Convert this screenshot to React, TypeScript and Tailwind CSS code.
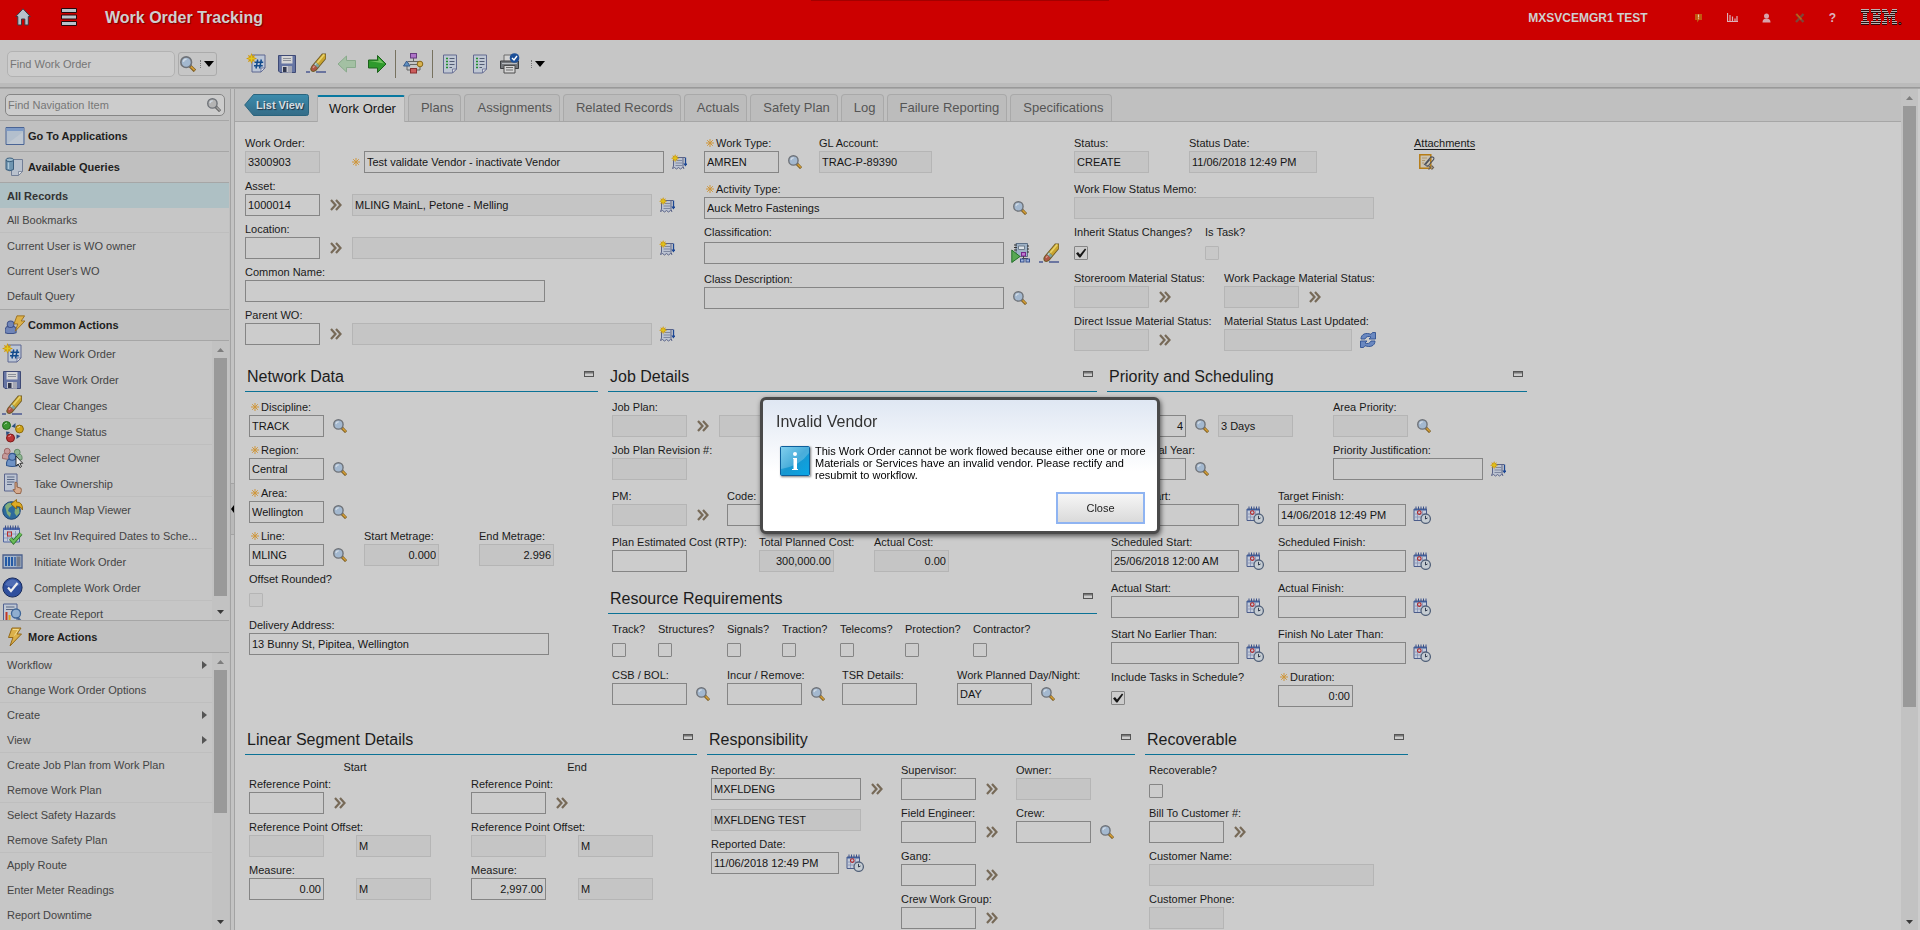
import React, { useId } from "react";

/* ---------- icons ---------- */

type IconProps = { className?: string };

const Svg = ({ size = 20, box = 20, className = "", children }: { size?: number; box?: number; className?: string; children: React.ReactNode }) => (
  <svg width={size} height={size} viewBox={`0 0 ${box} ${box}`} className={`block shrink-0 ${className}`} fill="none" aria-hidden="true">
    {children}
  </svg>
);

const Sparkle = () => (
  <>
    <path d="M5.500 0 6.700 3 9.200 1.800 8 4.300 11 5.500 8 6.700 9.200 9.200 6.700 8 5.500 11 4.300 8 1.800 9.200 3 6.700 0 5.500 3 4.300 1.800 1.800 4.300 3Z" fill="#d09a10" />
    <path d="M5.500 2.500v6M2.500 5.500h6" stroke="#e0c820" strokeWidth="1.400" />
  </>
);

const NewIcon = () => (
  <Svg size={21} box={21}>
    <path d="M6 2h13v13l-4 4H6z" fill="#bcc6d6" stroke="#5c6690" />
    <path d="M19 15h-4v4z" fill="#dfe3ea" stroke="#5c6690" strokeWidth=".8" />
    <path d="M11.700 6.500 10 15.500M15.300 6.500 13.600 15.500M8.500 9.300h8.700M8 12.700h8.700" stroke="#124a8c" strokeWidth="1.500" />
    <Sparkle />
  </Svg>
);

const SaveIcon = () => (
  <Svg>
    <path d="M1.500 1.500h17v17h-15.500l-1.500-1.500z" fill="#6675a3" stroke="#3f4a75" />
    <path d="M4.500 2h11v7.500h-11z" fill="#d5d5d5" />
    <path d="M6 4.500h8M6 6.500h8" stroke="#8b8f98" />
    <path d="M5 12h10v6.500h-10z" fill="#c9cad0" />
    <path d="M6 13h3.500v5h-3.500z" fill="#31374e" />
    <path d="M11 12h4v6.500h-4z" fill="#a4a7b4" />
  </Svg>
);

const EraserIcon = () => (
  <Svg size={21} box={21}>
    <path d="M0 19h4M10 19h10" stroke="#4c5a91" strokeWidth="1.600" />
    <path d="M20 .5v5.500L10.500 17.500q-3 2.500-5.500.5-1.500-2.500.5-5L16 .5z" fill="#6f5a24" />
    <path d="M19.300 1.200v4.300L13.500 12.500 9.800 9.300 16.500 1.200z" fill="#c9a42e" />
    <path d="M18.200 1.500 11.300 9.700" stroke="#e6d169" strokeWidth="1.700" />
    <path d="m9.800 9.300 3.700 3.200-2 2.300-3.600-3.200z" fill="#7fa39c" />
    <path d="M10.500 10 9 11.800" stroke="#bcd4cf" strokeWidth="1.200" />
    <path d="m7.900 11.600 3.600 3.200-1.700 2q-2.300 1.800-4 .6-1-1.800.4-3.800z" fill="#ae5545" />
    <path d="M8.500 13 7 14.800" stroke="#d49a8c" strokeWidth="1.200" />
  </Svg>
);

const BackArrow = () => (
  <Svg>
    <path d="M1 10 9.500 2v4.500H18.500v7H9.500V18z" fill="#a3c0a3" stroke="#8aaa8c" strokeLinejoin="round" />
  </Svg>
);

const NextArrow = () => (
  <Svg>
    <path d="M19 10 10.500 1.500v4.500H1.500v8H10.500v4.500z" fill="#2f9a2c" stroke="#1c611b" strokeLinejoin="round" />
    <path d="M2.500 7H11.500V4l5.500 5.500z" fill="#72c25f" />
  </Svg>
);

const FlowIcon = () => (
  <Svg size={21} box={21}>
    <path d="M10.500 5v3M5 8.500h11M4 8.500v2M17 8v2M4 13v4h3M17 14v3h-3" stroke="#656565" />
    <rect x="7.500" y=".5" width="6" height="4.500" fill="#ae74c8" stroke="#673b80" />
    <path d="M3.700 8 7 13H.5z" fill="#5f8fc0" stroke="#375a8a" />
    <path d="M7 11.500h7" stroke="#656565" />
    <circle cx="17" cy="11" r="2.800" fill="#d8b350" stroke="#896718" />
    <rect x="7.500" y="15.500" width="6" height="4.500" fill="#cb5c5c" stroke="#8a2e2e" />
  </Svg>
);

const ListIcon = () => (
  <Svg>
    <path d="M3.500 1h13v14l-4 4h-9z" fill="#bfc7d3" stroke="#626a90" />
    <path d="M16.500 15h-4v4z" fill="#e0e0e6" stroke="#626a90" strokeWidth=".8" />
    <path d="M6 4.500h2M6 7.500h2M6 10.500h2M6 13.500h2" stroke="#21912a" strokeWidth="1.600" />
    <path d="M9.500 4.500h5M9.500 7.500h5M9.500 10.500h5M9.500 13.500h2.500" stroke="#525c74" />
  </Svg>
);

const PrintIcon = () => (
  <Svg size={21} box={21}>
    <path d="M5 2h9v7H5z" fill="#d2d2d2" stroke="#6c6c6c" />
    <path d="M1.500 8h18v7.500h-18z" fill="#74777b" stroke="#3b3d40" />
    <path d="M3 10.500h15" stroke="#b9bcc0" />
    <path d="M5 12.500h11v7.500H5z" fill="#d4d4d4" stroke="#4c4c4c" />
    <path d="M7 14.500h7M7 17h7" stroke="#6d6d6d" />
    <circle cx="15.500" cy="5" r="4.800" fill="#1c4f98" />
    <path d="m13 5 2 2 3-4" stroke="#fff" strokeWidth="1.400" />
  </Svg>
);

const Magnifier = ({ size = 14, gray = false }: { size?: number; gray?: boolean }) => (
  <Svg size={size} box={15}>
    <path d="m9 9 5 5" stroke={gray ? "#5f5f5f" : "#7d5f26"} strokeWidth="3.200" />
    <path d="m10.200 9.900 3.500 3.500" stroke={gray ? "#a4a4a4" : "#d9a136"} strokeWidth="1.500" />
    <circle cx="5.800" cy="5.800" r="5" fill={gray ? "#b4b4b4" : "#a3b8cf"} stroke="#6e7278" strokeWidth="1.500" />
    <path d="M3.200 5.500a2.800 2.800 0 0 1 3-2.500" stroke="#d0dae4" strokeWidth="1.300" />
  </Svg>
);

const Chevrons = () => (
  <Svg size={12} box={12}>
    <path d="m1 1 4.500 5L1 11M6 1l4.500 5L6 11" stroke="#776a58" strokeWidth="2.200" />
  </Svg>
);

const LongDesc = () => (
  <Svg size={16} box={16}>
    <path d="M2.500 3.500h11.500M2.500 3.500v8.500l-1 2.500 2-1 2 1.500 2-1.500 2 1.500 2-1.500 1.500 1-1-2V3.500z" fill="#bcc3d2" stroke="#5b6488" strokeLinejoin="round" />
    <path d="M5.500 6.500h6M4.500 9h7M4.500 11.500h7" stroke="#7f88a0" />
    <path d="M14.500 3.500v7" stroke="#1c4794" strokeWidth="1.300" />
    <path d="M12.300 9.500H16.500l-2.100 3z" fill="#1c4794" />
    <g transform="scale(.75)"><Sparkle /></g>
  </Svg>
);

const CalIcon = () => (
  <Svg size={18} box={18}>
    <path d="M1 3h12.500v11.500H1z" fill="#c4cbda" stroke="#4b5c8b" />
    <path d="M1 3h12.500v1.500H1z" fill="#42609c" />
    <path d="M3 .5v3M5.500.5v3M8 .5v3M10.500.5v3M13 .5v3" stroke="#3a508a" />
    <path d="M4.500 5v9M9.500 5v9M1 8h12M1 11h12" stroke="#8593b5" strokeWidth=".8" />
    <circle cx="6.300" cy="6.600" r="1.800" stroke="#b52424" strokeWidth="1.100" />
    <circle cx="12.700" cy="12.700" r="4.700" fill="#c5ccd2" stroke="#53627a" strokeWidth="1.300" />
    <path d="M12.500 9.800v3.200l2-1" stroke="#333d50" />
  </Svg>
);

const ClassIcon = () => (
  <Svg>
    <path d="M5 .5h11.500v13H5z" fill="#9fb2c6" stroke="#5e7187" />
    <path d="M7.500 3h6v3.500h-6z" fill="#dce2e8" stroke="#6f7d8c" />
    <path d="M3 2h3M3 4.500h3M3 7h3M16 3h2M16 6h2M16 9h2" stroke="#333" />
    <path d="M.8 7v12.500L9 13.500z" fill="#57a852" stroke="#22702a" />
    <rect x="10.500" y="9.500" width="4" height="3.500" fill="#bf76d0" stroke="#74278a" />
    <path d="M12.500 13v2.500M11 15.500h6" stroke="#444" />
    <rect x="9.500" y="16" width="3.500" height="3" fill="#9eb4de" stroke="#36508e" />
    <rect x="15" y="16" width="3.500" height="3" fill="#9eb4de" stroke="#36508e" />
  </Svg>
);

const RefreshIcon = () => (
  <Svg size={16} box={16}>
    <path d="M1 7C1 2 6 .3 11 2.300L12.500.5h3V7H9l2-2C8.500 3.800 6 4.500 5 7z" fill="#6a88c0" stroke="#2f5192" strokeWidth=".9" />
    <path d="M15 9C15 14 10 15.700 5 13.700L3.500 15.500h-3V9H7l-2 2c2.500 1.200 5 .5 6-2z" fill="#6a88c0" stroke="#2f5192" strokeWidth=".9" />
  </Svg>
);

const AttachIcon = () => (
  <Svg size={16} box={16}>
    <path d="M.8.800h11v13.500h-11z" fill="#cbc3b2" stroke="#b67c15" strokeWidth="1.500" />
    <path d="M3 4h5M3 6.500h3M3 9h2" stroke="#b09a72" />
    <path d="m5 11 6.500-7.500c1.500-1.500 4.500 0 3 2.200L9.500 11.500c-1.500 1.500-3.500 0-2.500-1.500l4-4.500" stroke="#4e525c" strokeWidth="1.100" />
    <path d="m9.500 11.500 2 2-2 2M12.500 11.500l2 2-2 2" stroke="#6d6254" strokeWidth="1.200" />
  </Svg>
);

const WindowIcon = () => (
  <Svg>
    <path d="M1 1.500h18v17H1z" fill="#b3bfcd" stroke="#4a6495" />
    <path d="M1.500 2h17v3h-17z" fill="#7d9ac6" />
    <path d="M2 18 18 6v12z" fill="#c7cdd4" opacity=".6" />
  </Svg>
);

const QueriesIcon = () => (
  <Svg>
    <path d="M6.500 2.500h11v12l-4 4h-7z" fill="#b9c1cd" stroke="#727e96" />
    <path d="M17.500 14.500h-4v4z" fill="#dfe2e6" stroke="#727e96" strokeWidth=".8" />
    <path d="M1 3v9.500q4 2.500 7.500 0V3z" fill="#6f95b0" stroke="#3c5f7d" />
    <ellipse cx="4.800" cy="2.800" rx="3.800" ry="1.800" fill="#9dbbcd" stroke="#3c5f7d" />
    <path d="M3.500 5.500v6.500" stroke="#adc8d8" strokeWidth="1.400" />
  </Svg>
);

const Bolt = () => <path d="M7 1h9l-4 6h4.500L5 19l3-8.500H3.500z" fill="#dcb14a" stroke="#93691a" strokeLinejoin="round" />;
const BoltIcon = () => (
  <Svg>
    <Bolt />
    <path d="M8 2.500h5.500L9.500 8.500" stroke="#f0dc94" />
  </Svg>
);

const PersonShape = ({ x, y, fill, line }: { x: number; y: number; fill: string; line: string }) => (
  <g transform={`translate(${x} ${y})`}>
    <path d="M.5 10.500q-.5-5 2.500-5.500h4.500q3 .5 2.500 5.500-5 1.500-9.500 0z" fill={fill} stroke={line} strokeWidth=".9" />
    <circle cx="5.200" cy="3.200" r="2.900" fill={fill} stroke={line} strokeWidth=".9" />
  </g>
);

const ActionsIcon = () => (
  <Svg>
    <g transform="translate(-1 5) scale(1.150)"><PersonShape x={0.500} y={0.500} fill="#7186b8" line="#3f5288" /></g>
    <g transform="translate(6 0) scale(.85)"><Bolt /></g>
  </Svg>
);

const StatusIcon = () => (
  <Svg size={22} box={22}>
    <path d="m9.500 5.500 4-3.500v5zM4 10.500l4 .5-3.500 4zM14.500 13.500l4 1.500-4 3z" fill="#2c4f80" />
    <circle cx="4.500" cy="4.500" r="4" fill="#3c9632" stroke="#226a1c" />
    <circle cx="17.500" cy="8" r="3.900" fill="#d0a41b" stroke="#8c6b0c" />
    <circle cx="8.500" cy="17" r="4" fill="#bd3434" stroke="#7e1b1b" />
    <path d="M2.500 3.500q1-1.500 2.500-1.500M15.500 7q1-1.500 2.500-1.500M6.500 16q1-1.500 2.500-1.500" stroke="#fff" opacity=".6" />
  </Svg>
);

const OwnerIcon = () => (
  <Svg size={22} box={22}>
    <PersonShape x={0} y={1} fill="#c79a9a" line="#95605f" />
    <PersonShape x={10} y={2} fill="#8fb593" line="#5b8460" />
    <g transform="translate(4 6) scale(1.200)"><PersonShape x={0} y={0} fill="#6f93c5" line="#33578e" /></g>
    <path d="M14 9v10l2.200-2 1.800 3.500 1.500-1-1.700-3.200h3z" fill="#f0f0f0" stroke="#222" strokeWidth=".9" />
  </Svg>
);

const TakeIcon = () => (
  <Svg size={21} box={21}>
    <path d="M2.500 1h12.500v17H2.500z" fill="#bcc4d3" stroke="#5a648c" />
    <path d="M5 4h7.500M5 6.500h7.500M5 9h7.500M5 11.500h5" stroke="#586684" />
    <path d="M13 9.500q1.500-1 2 .5v4l4 1.200q1 2-.5 5.300h-4.500l-3-4 2 .3z" fill="#d6ab8f" stroke="#8d5d42" strokeWidth=".9" />
  </Svg>
);

const GlobeIcon = () => (
  <Svg size={21} box={21}>
    <circle cx="9.500" cy="11.500" r="8.800" fill="#2d6a9c" stroke="#1b4470" />
    <path d="M3 7q3-4 6-3l1 3-3 2-1 3 3 2-1 4-3-3-1-4zM13 10l4-1 .5 5-3 3-2-3z" fill="#83ad7a" />
    <path d="M9 5 14.500.5v2.500q6.500 0 6 8-1.500-4-6-4V10z" fill="#deab24" stroke="#8e6509" strokeWidth=".9" />
  </Svg>
);

const CalCheckIcon = () => (
  <Svg size={21} box={21}>
    <path d="M1.500 3h16v14h-16z" fill="#c5ccdb" stroke="#4e65a0" />
    <path d="M1.500 3h16v2h-16z" fill="#4c68ae" />
    <path d="M3.500.5v4M6 .5v4M8.500.5v4M11 .5v4M13.500.5v4M16 .5v4" stroke="#3a508a" />
    <path d="M5.500 6v10M9.500 6v10M13.500 6v10M2 9h15M2 13h15" stroke="#8593b5" strokeWidth=".8" />
    <rect x="5.500" y="7" width="4" height="4" stroke="#b82b2b" />
    <path d="m8.500 13.500 3 3.500L19 8.500" stroke="#2b7326" strokeWidth="3.800" />
    <path d="m8.500 13.500 3 3.500L19 8.500" stroke="#6cbc5c" strokeWidth="2.200" />
  </Svg>
);

const InitiateIcon = () => (
  <Svg size={21} box={21}>
    <path d="M1 4h19v13H1z" fill="#a5b6cb" stroke="#4b5f8a" strokeWidth="1.300" />
    <path d="M4 6v9M7 6v9M10 6v9" stroke="#245aa5" strokeWidth="2" />
    <path d="M13 6v9" stroke="#4b72ac" strokeWidth="2" />
    <path d="M14.500 5.500h4v10h-4z" fill="#747b88" />
  </Svg>
);

const CompleteIcon = () => (
  <Svg size={21} box={21}>
    <circle cx="10.500" cy="10.500" r="9.600" fill="#2f4f9d" stroke="#182b5d" />
    <path d="M3 8q2-5 7.500-5.500Q16 3 18 8q-7 3-15 0z" fill="#5d7bbd" opacity=".7" />
    <path d="m6 10.500 3 3.500 6.500-8" stroke="#eee" strokeWidth="2.200" />
  </Svg>
);

const ReportIcon = () => (
  <Svg size={21} box={21}>
    <path d="M1.500 1h13.500v18H1.500z" fill="#c0c8d4" stroke="#4f6191" />
    <path d="M4 4h8.500M4 6.500h8.500" stroke="#586684" />
    <path d="M4.500 9v8" stroke="#c23626" strokeWidth="2" />
    <path d="M7.500 12v5" stroke="#d8a922" strokeWidth="2" />
    <path d="m15 14 4.500 5" stroke="#51698e" strokeWidth="2.400" />
    <circle cx="14" cy="10.500" r="4.500" fill="#90aed0" stroke="#3f6597" strokeWidth="1.300" />
  </Svg>
);

const InfoIcon = () => (
  <svg width="30" height="30" viewBox="0 0 30 30" className="block shrink-0 shadow-[1px_1px_2px_rgba(0,0,0,0.5)]" aria-hidden="true">
    <defs>
      <linearGradient id="info-fill" x1="0" y1="0" x2="1" y2="1">
        <stop offset="0" stopColor="#5fc3ea" />
        <stop offset=".5" stopColor="#1797d0" />
        <stop offset="1" stopColor="#0aa6e6" />
      </linearGradient>
    </defs>
    <rect x=".5" y=".5" width="29" height="29" rx="1" fill="url(#info-fill)" stroke="#0d5f9c" />
    <path d="M1 1h28v6Q20 20 1 23z" fill="#fff" opacity=".22" />
    <circle cx="15" cy="8" r="2" fill="#fff" />
    <path d="M13 12h4v11h1v1h-6v-1h1.500v-10H13z" fill="#fff" />
  </svg>
);

const Star = ({ className = "" }: IconProps) => (
  <svg width="8" height="8" viewBox="0 0 8 8" className={`inline-block shrink-0 ${className}`} aria-hidden="true">
    <path d="M4 0v8M0 4h8M1.200 1.200l5.600 5.600M6.800 1.200 1.200 6.800" stroke="#cf963a" strokeWidth="1" />
  </svg>
);

const Down = ({ className = "" }: IconProps) => (
  <svg width="10" height="6" viewBox="0 0 10 6" className={`block shrink-0 ${className}`} aria-hidden="true">
    <path d="M0 0h10L5 6z" fill="#000" />
  </svg>
);

const IbmLogo = () => {
  const rows: [number, number][][] = [
    [[0, 8], [10, 19], [21, 26], [31, 36]],
    [[0, 8], [10, 20], [21, 27], [30, 36]],
    [[2, 6], [12, 15], [17, 20], [23, 28], [29, 34]],
    [[2, 6], [12, 19], [23, 34]],
    [[2, 6], [12, 19], [23, 26], [27, 30], [31, 34]],
    [[2, 6], [12, 15], [17, 20], [23, 26], [28, 29], [31, 34]],
    [[0, 8], [10, 20], [21, 26], [28, 29], [31, 36]],
    [[0, 8], [10, 19], [21, 26], [31, 36]],
  ];
  return (
    <svg width="41" height="17" viewBox="0 0 41 17" role="img" aria-label="IBM" className="block shrink-0">
      {rows.map((row, y) =>
        row.map(([a, b]) => (
          <g key={`${y}-${a}`}>
            <rect x={a} y={y * 2} width={b - a} height="1" fill="#b9b4b4" />
            <rect x={a} y={y * 2 + 1} width={b - a} height="1" fill="#2a0c0c" />
          </g>
        )),
      )}
      <circle cx="39" cy="14.500" r="1.500" fill="#1a0505" />
      <circle cx="39" cy="14.500" r=".6" fill="#b9b4b4" />
    </svg>
  );
};

/* ---------- form parts ---------- */

const widths = {
  s: "w-[75px]",
  m: "w-[113px]",
  d: "w-[128px]",
  l: "w-[150px]",
  xl: "w-[225px]",
  full: "w-[300px]",
};

type BoxProps = { id?: string; w?: keyof typeof widths; value?: string; ro?: boolean; right?: boolean; name?: string; className?: string };

const Box = ({ id, w = "s", value = "", ro, right, name, className = "" }: BoxProps) => (
  <input
    id={id}
    type="text"
    aria-label={name}
    defaultValue={value}
    readOnly={ro}
    className={`block h-[22px] shrink-0 rounded-none border px-[2px] text-[11px] text-[#151515] outline-none ${widths[w]} ${
      ro ? "border-[#b5b5b5] bg-[#c5c5c5]" : "border-[#858585] bg-[#cccccc]"
    } ${right ? "text-right" : ""} ${className}`}
  />
);

const icons = {
  find: { el: <Magnifier />, cls: "ml-[9px]", label: "Select value" },
  menu: { el: <Chevrons />, cls: "ml-[10px]", label: "Detail menu" },
  desc: { el: <LongDesc />, cls: "ml-[7px]", label: "Long description" },
  cal: { el: <CalIcon />, cls: "ml-[7px]", label: "Select date" },
  refresh: { el: <RefreshIcon />, cls: "ml-2", label: "Refresh" },
  classify: { el: <ClassIcon />, cls: "ml-[7px]", label: "Classify" },
  clear: { el: <EraserIcon />, cls: "ml-2", label: "Clear" },
};

const Act = ({ kind }: { kind: keyof typeof icons }) => (
  <button type="button" aria-label={icons[kind].label} className={`shrink-0 ${icons[kind].cls}`}>
    {icons[kind].el}
  </button>
);

type FieldProps = BoxProps & { label: string; req?: boolean; icon?: keyof typeof icons; cell?: string; line?: string; children?: React.ReactNode };

const Label = ({ id, req, children }: { id: string; req?: boolean; children: React.ReactNode }) => (
  <label htmlFor={id} className="flex h-[21px] items-center whitespace-nowrap pt-[5px] leading-4">
    {req && <Star className="mx-[2px]" />}
    {children}
  </label>
);

const Field = ({ label, req, icon, cell = "", line = "h-[22px]", children, ...box }: FieldProps) => {
  const id = useId();
  return (
    <div className={`shrink-0 ${cell}`}>
      <Label id={id} req={req}>{label}</Label>
      <div className={`flex items-center ${line}`}>
        <Box id={id} {...box} />
        {icon && <Act kind={icon} />}
        {children}
      </div>
    </div>
  );
};

const Check = ({ label, checked, disabled, cell = "" }: { label: string; checked?: boolean; disabled?: boolean; cell?: string }) => {
  const id = useId();
  return (
    <div className={`shrink-0 ${cell}`}>
      <Label id={id}>{label}</Label>
      <div className="relative h-[22px] pt-[6px]">
        <input
          id={id}
          type="checkbox"
          defaultChecked={checked}
          disabled={disabled}
          className={`peer block size-[14px] appearance-none rounded-[1px] border ${disabled ? "border-[#b5b5b5] bg-[#c8c8c8]" : "border-[#858585] bg-[#cccccc]"}`}
        />
        <svg width="12" height="12" viewBox="0 0 12 12" className="pointer-events-none absolute left-px top-[7px] hidden peer-checked:block" aria-hidden="true">
          <path d="M1 6.500 3 5l2 2.500L10 1.500l1.200 1L5.500 10.500H4.300z" fill="#161616" />
        </svg>
      </div>
    </div>
  );
};

const Section = ({ title, width, children }: { title: string; width: string; children: React.ReactNode }) => (
  <section className={`shrink-0 ${width}`}>
    <div className="flex h-[34px] items-center justify-between border-b border-[#0b7296] pl-[2px] pr-1">
      <h2 className="pt-[5px] text-base leading-5 text-[#1c1c1c]">{title}</h2>
      <button type="button" aria-label={`Minimize ${title}`} className="pb-[2px]">
        <svg width="10" height="6" viewBox="0 0 10 6" className="block" aria-hidden="true">
          <rect x=".5" y=".5" width="9" height="5" fill="#ccc" stroke="#555" />
          <rect x="1" y="1" width="8" height="1.500" fill="#777" />
        </svg>
      </button>
    </div>
    <div className="pl-1 pt-[2px]">{children}</div>
  </section>
);

const Row = ({ className = "", children }: { className?: string; children: React.ReactNode }) => <div className={`flex ${className}`}>{children}</div>;

const ScrollBar = ({ thumb, rest }: { thumb: string; rest: string }) => (
  <div className="flex w-[17px] shrink-0 flex-col items-stretch bg-[#c2c2c2]" aria-hidden="true">
    <div className="flex h-[17px] shrink-0 items-center justify-center">
      <svg width="7" height="4" viewBox="0 0 7 4"><path d="M3.500 0 7 4H0z" fill="#7d7d7d" /></svg>
    </div>
    <div className={`mx-[2px] bg-[#999999] ${thumb}`} />
    <div className={rest} />
    <div className="flex h-[17px] shrink-0 items-center justify-center">
      <svg width="7" height="4" viewBox="0 0 7 4"><path d="M3.500 4 7 0H0z" fill="#3a3a3a" /></svg>
    </div>
  </div>
);

/* ---------- header and toolbar ---------- */

const Header = () => (
  <header className="relative flex h-10 shrink-0 items-start bg-[#cc0000] text-[#cfcfcf]">
    <div className="absolute left-1/2 top-0 h-px w-[298px] -translate-x-1/2 bg-[#a30000]" />
    <button type="button" aria-label="Home" className="ml-[15px] mt-2">
      <svg width="16" height="18" viewBox="0 0 16 18" aria-hidden="true">
        <path d="M8 .8 15.300 8.500h-2v8.500H9.800V11H6.500v6H2.800V8.500h-2z" fill="#b6c0c9" stroke="#3d3a42" />
      </svg>
    </button>
    <button type="button" aria-label="Menu" className="ml-[30px] mt-2">
      <svg width="16" height="18" viewBox="0 0 16 18" aria-hidden="true">
        <path d="M.5.5h15v4H.5zM.5 7h15v4H.5zM.5 13.500h15v4H.5z" fill="#b8c1ca" stroke="#26080c" />
      </svg>
    </button>
    <h1 className="ml-[28px] text-base font-bold leading-[35px] [text-shadow:1px_1px_1px_#700]">Work Order Tracking</h1>
    <div className="ml-auto flex h-[35px] items-center pr-[18px]">
      <span className="mr-[46px] text-xs font-bold">MXSVCEMGR1 TEST</span>
      <button type="button" aria-label="Bulletin board" className="mr-[24px]">
        <svg width="9" height="10" viewBox="0 0 9 10"><path d="M1 1h7v6H5L3 9.500V7H1z" fill="#c05a10" /><path d="M4.500 1.500v3M4.500 5.300v1" stroke="#eacdb0" strokeWidth="1.200" /></svg>
      </button>
      <button type="button" aria-label="Reports" className="mr-[24px]">
        <svg width="11" height="9" viewBox="0 0 11 9"><path d="M.5 0v8.500H11M3 2v6M5.500 3.500V8M8 5.500V8M10 3v5" stroke="#dcb0b8" strokeWidth="1.200" fill="none" /></svg>
      </button>
      <button type="button" aria-label="Profile" className="mr-[24px]">
        <svg width="9" height="10" viewBox="0 0 9 10"><circle cx="4.500" cy="3" r="2.500" fill="#d8a3ab" /><path d="M.5 9.500q0-4 4-4t4 4z" fill="#d8a3ab" /></svg>
      </button>
      <button type="button" aria-label="Sign out" className="mr-[24px]">
        <svg width="10" height="10" viewBox="0 0 10 10"><path d="m1 1 7.500 8M8.500 1 1 9" stroke="#7d4538" strokeWidth="2.400" /><path d="m1.500 1 5 5.500" stroke="#c85f10" strokeWidth="1.600" /></svg>
      </button>
      <button type="button" aria-label="Help" className="mr-[25px] text-xs font-bold text-[#dcb5c0]">?</button>
      <IbmLogo />
    </div>
  </header>
);

const Tool = ({ name, className = "", children }: { name: string; className?: string; children: React.ReactNode }) => (
  <button type="button" aria-label={name} className={`shrink-0 ${className}`}>{children}</button>
);

const Toolbar = () => (
  <div className="flex h-[49px] shrink-0 flex-col border-b border-[#a8a8a8] bg-[#c6c6c6]">
    <div className="flex h-[43px] items-center pl-[7px] pt-[4px]">
      <input type="text" aria-label="Find Work Order" placeholder="Find Work Order" className="h-[26px] w-[168px] rounded-[5px] border border-[#b2b2b2] bg-[#cccccc] px-[2px] text-[11px] outline-none placeholder:text-[#757575]" />
      <button type="button" aria-label="Search" className="ml-[3px] flex h-[24px] w-[39px] items-center rounded-[3px] border border-[#ababab] pl-[1px]">
        <Magnifier size={16} />
        <span className="ml-[4px] mr-[3px] h-2 border-l border-dotted border-[#777]" />
        <Down />
      </button>
      <Tool name="New" className="ml-[29px]"><NewIcon /></Tool>
      <Tool name="Save" className="ml-[10px]"><SaveIcon /></Tool>
      <Tool name="Clear changes" className="ml-[9px]"><EraserIcon /></Tool>
      <Tool name="Previous" className="ml-[10px]"><BackArrow /></Tool>
      <Tool name="Next" className="ml-[10px]"><NextArrow /></Tool>
      <span className="ml-[8px] h-7 border-l border-[#77725f]" />
      <Tool name="Workflow map" className="ml-[7px]"><FlowIcon /></Tool>
      <span className="ml-[8px] h-7 border-l border-[#77725f]" />
      <Tool name="Reports" className="ml-[7px]"><ListIcon /></Tool>
      <Tool name="Forms" className="ml-[10px]"><ListIcon /></Tool>
      <Tool name="Print" className="ml-[9px]"><PrintIcon /></Tool>
      <button type="button" aria-label="More tools" className="ml-[11px] flex items-center">
        <span className="mr-[3px] h-2 border-l border-dotted border-[#777]" />
        <Down />
      </button>
    </div>
    <div className="h-1 bg-[#bbbbbb]" />
    <div className="h-px bg-[#999999]" />
  </div>
);

/* ---------- sidebar ---------- */

const queries = ["All Records", "All Bookmarks", "Current User is WO owner", "Current User's WO", "Default Query"];

const actions: [string, React.ReactNode, boolean?][] = [
  ["New Work Order", <NewIcon />],
  ["Save Work Order", <SaveIcon />],
  ["Clear Changes", <EraserIcon />, true],
  ["Change Status", <StatusIcon />, true],
  ["Select Owner", <OwnerIcon />],
  ["Take Ownership", <TakeIcon />, true],
  ["Launch Map Viewer", <GlobeIcon />],
  ["Set Inv Required Dates to Sche...", <CalCheckIcon />, true],
  ["Initiate Work Order", <InitiateIcon />],
  ["Complete Work Order", <CompleteIcon />, true],
  ["Create Report", <ReportIcon />],
];

const more: { text: string; sub?: boolean; line?: boolean }[] = [
  { text: "Workflow", sub: true, line: true },
  { text: "Change Work Order Options", line: true },
  { text: "Create", sub: true },
  { text: "View", sub: true, line: true },
  { text: "Create Job Plan from Work Plan" },
  { text: "Remove Work Plan", line: true },
  { text: "Select Safety Hazards" },
  { text: "Remove Safety Plan", line: true },
  { text: "Apply Route" },
  { text: "Enter Meter Readings" },
  { text: "Report Downtime" },
];

const SideHead = ({ icon, text, className }: { icon: React.ReactNode; text: string; className: string }) => (
  <h2 className={`flex shrink-0 items-center gap-[3px] border-[#a6a6a6] bg-[#c0c0c0] pl-[5px] font-bold text-[#1e1e1e] ${className}`}>
    {icon}
    {text}
  </h2>
);

const Sidebar = () => (
  <aside className="flex w-[229px] shrink-0 flex-col bg-[#c6c6c6] text-[#444444]">
    <div className="flex h-[32px] shrink-0 items-center border-b border-[#a6a6a6] bg-[#c0c0c0] pl-[5px] pr-1">
      <div className="flex h-[22px] flex-1 items-center rounded-[5px] border border-[#858585] bg-[#cccccc] px-[2px]">
        <input type="text" aria-label="Find Navigation Item" placeholder="Find Navigation Item" className="min-w-0 flex-1 bg-transparent text-[11px] outline-none placeholder:text-[#777777]" />
        <button type="button" aria-label="Find" className="mr-px"><Magnifier gray /></button>
      </div>
    </div>
    <SideHead icon={<WindowIcon />} text="Go To Applications" className="h-[31px] border-b" />
    <SideHead icon={<QueriesIcon />} text="Available Queries" className="h-[31px] border-b" />
    <ul className="shrink-0 pb-px">
      {queries.map((q, i) => (
        <li key={q}>
          <button
            type="button"
            className={`block h-[25px] w-full pl-[7px] text-left ${i === 0 ? "bg-[#aec0c4] font-bold text-[#333]" : ""} ${i === 1 ? "border-b border-[#bebebe]" : ""}`}
          >
            {q}
          </button>
        </li>
      ))}
    </ul>
    <SideHead icon={<ActionsIcon />} text="Common Actions" className="h-[32px] border-y" />
    <div className="flex min-h-0 flex-[279]">
      <ul className="min-w-0 flex-1 overflow-hidden">
        {actions.map(([text, icon, line]) => (
          <li key={text}>
            <button type="button" className={`flex h-[26px] w-full items-center border-b pl-[2px] text-left ${line ? "border-[#bebebe]" : "border-transparent"}`}>
              <span className="w-8 shrink-0">{icon}</span>
              <span className="whitespace-nowrap">{text}</span>
            </button>
          </li>
        ))}
      </ul>
      <ScrollBar thumb="flex-[237]" rest="flex-[7]" />
    </div>
    <SideHead icon={<BoltIcon />} text="More Actions" className="h-[33px] border-y" />
    <div className="flex min-h-0 flex-[277]">
      <ul className="min-w-0 flex-1 overflow-hidden">
        {more.map(({ text, sub, line }) => (
          <li key={text}>
            <button type="button" className={`flex h-[25px] w-full items-center justify-between border-b pl-[7px] pr-[5px] text-left ${line ? "border-[#bebebe]" : "border-transparent"}`}>
              {text}
              {sub && <svg width="5" height="8" viewBox="0 0 5 8" aria-hidden="true"><path d="M0 0l5 4-5 4z" fill="#555" /></svg>}
            </button>
          </li>
        ))}
      </ul>
      <ScrollBar thumb="flex-[143]" rest="flex-[100]" />
    </div>
  </aside>
);

const Splitter = () => (
  <div className="ml-px flex w-[5px] shrink-0 flex-col border-x border-[#a3a3a3] bg-[#c3c3c3]">
    <div className="flex-[394]" />
    <button type="button" aria-label="Collapse navigation" className="flex h-[52px] items-center border-y border-[#a3a3a3] bg-[#b9b9b9]">
      <svg width="3" height="8" viewBox="0 0 3 8" aria-hidden="true"><path d="M3 0v8L0 4z" fill="#000" /></svg>
    </button>
    <div className="flex-[395]" />
  </div>
);

/* ---------- record ---------- */

const tabs = ["Plans", "Assignments", "Related Records", "Actuals", "Safety Plan", "Log", "Failure Reporting", "Specifications"];

const Tabs = () => (
  <nav className="flex h-[33px] shrink-0 items-end border-b border-[#a6a6a6] bg-[#c0c0c0] pl-[9px]">
    <button type="button" className="relative mb-[5px] mr-2 h-[22px] w-[65px] pl-[12px] text-left font-bold text-[#d6dde0]">
      <svg width="65" height="22" viewBox="0 0 65 22" className="absolute inset-0" aria-hidden="true">
        <defs>
          <linearGradient id="back-fill" x1="0" y1="0" x2="0" y2="1">
            <stop offset="0" stopColor="#3c8cad" />
            <stop offset="1" stopColor="#356c87" />
          </linearGradient>
        </defs>
        <path d="M.7 11 9.500.5H62.500q2 0 2 2v17q0 2-2 2H9.500z" fill="url(#back-fill)" stroke="#2a647e" />
      </svg>
      <span className="relative [text-shadow:1px_1px_1px_#234]">List View</span>
    </button>
    <button type="button" className="-mb-px mr-[3px] h-[27px] rounded-t-[2px] border border-b-0 border-t-2 border-[#b0b0b0] border-t-[#0878a0] bg-[#cccccc] pb-px pl-[11px] pr-2 text-[13px] text-[#151515]">
      Work Order
    </button>
    <div className="flex gap-[3px]">
      {tabs.map((t) => (
        <button key={t} type="button" className="h-[27px] whitespace-nowrap rounded-t-[4px] border border-b-0 border-[#a9a9a9] bg-[#bcbcbc] pl-3 pr-[7px] text-[13px] text-[#555555]">
          {t}
        </button>
      ))}
    </div>
  </nav>
);

const TopBlock = () => (
  <div className="flex">
    <div className="w-[459px] shrink-0">
      <Row className="items-end">
        <Field label="Work Order:" value="3300903" ro cell="w-[107px]" />
        <div className="flex h-[22px] items-center">
          <Star className="mr-1" />
          <Box w="full" name="Description" value="Test validate Vendor - inactivate Vendor" />
          <Act kind="desc" />
        </div>
      </Row>
      <Field label="Asset:" value="1000014" icon="menu">
        <Box w="full" ro name="Asset description" value="MLING MainL, Petone - Melling" className="ml-[10px]" />
        <Act kind="desc" />
      </Field>
      <Field label="Location:" icon="menu">
        <Box w="full" ro name="Location description" className="ml-[10px]" />
        <Act kind="desc" />
      </Field>
      <Field label="Common Name:" w="full" />
      <Field label="Parent WO:" icon="menu">
        <Box w="full" ro name="Parent description" className="ml-[10px]" />
        <Act kind="desc" />
      </Field>
    </div>
    <div className="w-[370px] shrink-0">
      <Row className="mb-[3px]">
        <Field label="Work Type:" req value="AMREN" icon="find" cell="w-[115px]" />
        <Field label="GL Account:" w="m" ro value="TRAC-P-89390" />
      </Row>
      <Field label="Activity Type:" req w="full" value="Auck Metro Fastenings" icon="find" />
      <Field label="Classification:" w="full" icon="classify" line="h-[26px]">
        <Act kind="clear" />
      </Field>
      <Field label="Class Description:" w="full" icon="find" />
    </div>
    <div className="w-[340px] shrink-0">
      <Row className="mb-[3px]">
        <Field label="Status:" ro value="CREATE" cell="w-[115px]" />
        <Field label="Status Date:" w="d" ro value="11/06/2018 12:49 PM" />
      </Row>
      <Field label="Work Flow Status Memo:" w="full" ro />
      <Row className="mb-[3px]">
        <Check label="Inherit Status Changes?" checked cell="w-[131px]" />
        <Check label="Is Task?" disabled />
      </Row>
      <Row>
        <Field label="Storeroom Material Status:" ro icon="menu" cell="w-[150px]" />
        <Field label="Work Package Material Status:" ro icon="menu" />
      </Row>
      <Row>
        <Field label="Direct Issue Material Status:" ro icon="menu" cell="w-[150px]" />
        <Field label="Material Status Last Updated:" w="d" ro icon="refresh" />
      </Row>
    </div>
    <div className="shrink-0">
      <a href="#attachments" className="flex h-[21px] items-center pt-[5px] underline underline-offset-2">Attachments</a>
      <button type="button" aria-label="View attachments" className="ml-[5px] mt-[3px]"><AttachIcon /></button>
    </div>
  </div>
);

const NetworkData = () => (
  <Section title="Network Data" width="w-[353px]">
    <Field label="Discipline:" req value="TRACK" icon="find" />
    <Field label="Region:" req value="Central" icon="find" />
    <Field label="Area:" req value="Wellington" icon="find" />
    <Row>
      <Field label="Line:" req value="MLING" icon="find" cell="w-[115px]" />
      <Field label="Start Metrage:" ro right value="0.000" cell="w-[115px]" />
      <Field label="End Metrage:" ro right value="2.996" />
    </Row>
    <Row className="mb-[3px]"><Check label="Offset Rounded?" disabled /></Row>
    <Field label="Delivery Address:" w="full" value="13 Bunny St, Pipitea, Wellington" />
  </Section>
);

const JobColumn = () => (
  <div className="w-[489px] shrink-0">
    <Section title="Job Details" width="w-full">
      <Field label="Job Plan:" ro icon="menu">
        <Box w="full" ro name="Job plan description" className="ml-[10px]" />
      </Field>
      <Field label="Job Plan Revision #:" ro />
      <Row className="mt-[3px]">
        <Field label="PM:" ro icon="menu" cell="w-[115px]" />
        <Field label="Code:" />
      </Row>
      <Row className="mb-2 mt-[3px]">
        <Field label="Plan Estimated Cost (RTP):" cell="w-[147px]" />
        <Field label="Total Planned Cost:" ro right value="300,000.00" cell="w-[115px]" />
        <Field label="Actual Cost:" ro right value="0.00" />
      </Row>
    </Section>
    <Section title="Resource Requirements" width="w-full">
      <Row className="mb-[3px]">
        <Check label="Track?" cell="w-[46px]" />
        <Check label="Structures?" cell="w-[69px]" />
        <Check label="Signals?" cell="w-[55px]" />
        <Check label="Traction?" cell="w-[58px]" />
        <Check label="Telecoms?" cell="w-[65px]" />
        <Check label="Protection?" cell="w-[68px]" />
        <Check label="Contractor?" />
      </Row>
      <Row>
        <Field label="CSB / BOL:" icon="find" cell="w-[115px]" />
        <Field label="Incur / Remove:" icon="find" cell="w-[115px]" />
        <Field label="TSR Details:" cell="w-[115px]" />
        <Field label="Work Planned Day/Night:" value="DAY" icon="find" />
      </Row>
    </Section>
  </div>
);

const Priority = () => (
  <Section title="Priority and Scheduling" width="w-[420px]">
    <Row>
      <Field label="Priority:" req right value="4" icon="find" cell="w-[222px]">
        <Box ro name="Priority description" value="3 Days" className="ml-[9px]" />
      </Field>
      <Field label="Area Priority:" ro icon="find" />
    </Row>
    <Row>
      <Field label="Financial Year:" req icon="find" cell="w-[222px]" />
      <Field label="Priority Justification:" w="l" icon="desc" />
    </Row>
    <Row className="mt-[3px]">
      <Field label="Target Start:" w="d" icon="cal" cell="w-[167px]" />
      <Field label="Target Finish:" w="d" icon="cal" value="14/06/2018 12:49 PM" />
    </Row>
    <Row className="mt-[3px]">
      <Field label="Scheduled Start:" w="d" icon="cal" value="25/06/2018 12:00 AM" cell="w-[167px]" />
      <Field label="Scheduled Finish:" w="d" icon="cal" />
    </Row>
    <Row className="mt-[3px]">
      <Field label="Actual Start:" w="d" icon="cal" cell="w-[167px]" />
      <Field label="Actual Finish:" w="d" icon="cal" />
    </Row>
    <Row className="mt-[3px]">
      <Field label="Start No Earlier Than:" w="d" icon="cal" cell="w-[167px]" />
      <Field label="Finish No Later Than:" w="d" icon="cal" />
    </Row>
    <Row>
      <Check label="Include Tasks in Schedule?" checked cell="w-[167px]" />
      <Field label="Duration:" req right value="0:00" />
    </Row>
  </Section>
);

const Segment = ({ title, measure }: { title: string; measure: string }) => (
  <div className="w-[222px] shrink-0">
    <h3 className="h-[14px] w-[212px] text-center leading-5">{title}</h3>
    <Field label="Reference Point:" icon="menu" />
    <Row className="items-end">
      <Field label="Reference Point Offset:" ro cell="w-[107px]" />
      <Box ro name={`${title} offset unit`} value="M" />
    </Row>
    <Row className="items-end">
      <Field label="Measure:" right value={measure} cell="w-[107px]" />
      <Box ro name={`${title} measure unit`} value="M" />
    </Row>
  </div>
);

const LowerSections = () => (
  <div className="mt-[14px] flex gap-[10px]">
    <Section title="Linear Segment Details" width="w-[452px]">
      <Row>
        <Segment title="Start" measure="0.00" />
        <Segment title="End" measure="2,997.00" />
      </Row>
    </Section>
    <Section title="Responsibility" width="w-[428px]">
      <Row>
        <div className="w-[190px] shrink-0">
          <Field label="Reported By:" w="l" value="MXFLDENG" icon="menu" />
          <Box w="l" ro name="Reported by name" value="MXFLDENG TEST" className="mt-[9px]" />
          <Field label="Reported Date:" w="d" icon="cal" value="11/06/2018 12:49 PM" />
        </div>
        <div className="w-[115px] shrink-0">
          <Field label="Supervisor:" icon="menu" />
          <Field label="Field Engineer:" icon="menu" />
          <Field label="Gang:" icon="menu" />
          <Field label="Crew Work Group:" icon="menu" />
        </div>
        <div>
          <Field label="Owner:" ro />
          <Field label="Crew:" icon="find" />
        </div>
      </Row>
    </Section>
    <Section title="Recoverable" width="w-[263px]">
      <Check label="Recoverable?" />
      <Field label="Bill To Customer #:" icon="menu" />
      <Field label="Customer Name:" w="xl" ro />
      <Field label="Customer Phone:" ro />
    </Section>
  </div>
);

const Dialog = () => (
  <div className="fixed inset-0 flex items-center justify-center">
    <div
      role="dialog"
      aria-modal="true"
      aria-labelledby="dialog-title"
      className="w-[400px] rounded-[6px] border-[3px] border-[#4a4a4a] bg-white bg-[linear-gradient(#dfe7f3,#ffffff_55%)] pb-[7px] pl-[13px] pr-2 pt-3 shadow-[1px_2px_5px_rgba(0,0,0,0.6)]"
    >
      <h2 id="dialog-title" className="text-base leading-5 text-[#333333]">Invalid Vendor</h2>
      <div className="mt-[13px] flex gap-[5px] pl-1">
        <div className="pt-px"><InfoIcon /></div>
        <p className="text-[11px] leading-3 text-black">
          This Work Order cannot be work flowed because either one or more Materials or Services have an invalid vendor. Please rectify and resubmit to workflow.
        </p>
      </div>
      <div className="mt-[11px] flex justify-end pr-1">
        <button type="button" className="h-[32px] w-[89px] border-2 border-[#8fb4f2] bg-[linear-gradient(#f6f6f6,#dadada)] text-[11px] text-[#222222]">
          Close
        </button>
      </div>
    </div>
  </div>
);

export default function App() {
  return (
    <div className="flex h-screen w-full flex-col overflow-hidden bg-[#cccccc] font-['Liberation_Sans',Arial,sans-serif] text-[11px] leading-4 text-[#1a1a1a]">
      <Header />
      <Toolbar />
      <div className="flex min-h-0 flex-1 bg-[#c0c0c0]">
        <Sidebar />
        <Splitter />
        <main className="flex min-w-0 flex-1 flex-col">
          <Tabs />
          <div className="min-h-0 flex-1 overflow-hidden bg-[#cccccc] pl-[10px] pt-2">
            <TopBlock />
            <div className="mt-[7px] flex gap-[10px]">
              <NetworkData />
              <JobColumn />
              <Priority />
            </div>
            <LowerSections />
          </div>
        </main>
        <ScrollBar thumb="flex-[601]" rest="flex-[206]" />
        <div className="w-[2px] shrink-0 bg-[#cccccc]" />
      </div>
      <Dialog />
    </div>
  );
}
